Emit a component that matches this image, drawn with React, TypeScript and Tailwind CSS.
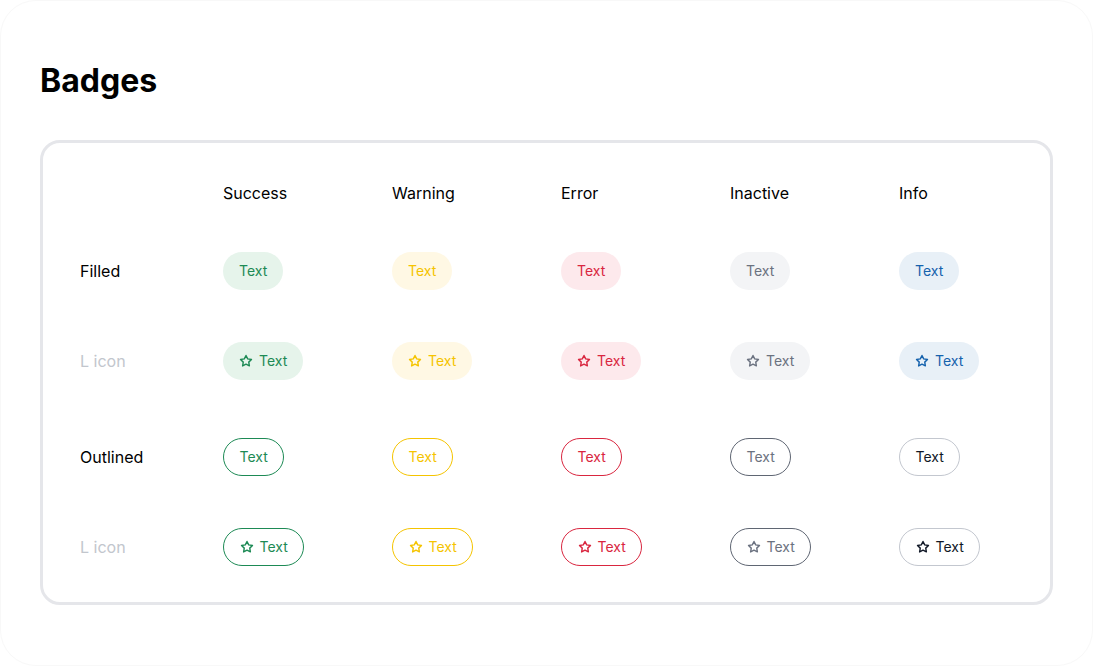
import React from "react";

const Star = ({ className = "" }: { className?: string }) => (
  <svg
    width="14"
    height="14"
    viewBox="0 0 24 24"
    fill="none"
    stroke="currentColor"
    strokeWidth="2.4"
    strokeLinecap="round"
    strokeLinejoin="round"
    className={className}
  >
    <path d="M12 2.5l2.9 5.9 6.5.95-4.7 4.58 1.1 6.47L12 17.35l-5.8 3.05 1.1-6.47-4.7-4.58 6.5-.95L12 2.5z" />
  </svg>
);

type Variant = {
  name: string;
  filled: string;
  outlined: string;
};

const variants: Variant[] = [
  {
    name: "Success",
    filled: "bg-[#e6f4eb] text-[#1d8a55]",
    outlined: "border border-[#1d8a55] text-[#1d8a55]",
  },
  {
    name: "Warning",
    filled: "bg-[#fff8e4] text-[#f5c400]",
    outlined: "border border-[#f5c400] text-[#f5c400]",
  },
  {
    name: "Error",
    filled: "bg-[#fde9ec] text-[#d9263f]",
    outlined: "border border-[#d9263f] text-[#d9263f]",
  },
  {
    name: "Inactive",
    filled: "bg-[#f3f4f6] text-[#6b7280]",
    outlined: "border border-[#5f6673] text-[#6b7280]",
  },
  {
    name: "Info",
    filled: "bg-[#e8f0f7] text-[#1562ad]",
    outlined: "border border-[#c3c7cf] text-[#111827]",
  },
];

const Badge = ({ cls, icon, outlined }: { cls: string; icon?: boolean; outlined?: boolean }) => (
  <span
    className={`inline-flex h-[38px] items-center gap-[6px] rounded-full text-sm leading-5 ${
      outlined ? "px-[15.5px]" : "px-4"
    } ${cls}`}
  >
    {icon && <Star />}
    Text
  </span>
);

const Row = ({
  label,
  muted,
  kind,
  icon,
  className,
}: {
  label: string;
  muted?: boolean;
  kind: "filled" | "outlined";
  icon?: boolean;
  className: string;
}) => (
  <div className={`grid h-[38px] grid-cols-[143px_repeat(5,169px)] items-center ${className}`}>
    <div className={`text-base ${muted ? "text-[#c2c6cd]" : "text-black"}`}>{label}</div>
    {variants.map((v) => (
      <div key={v.name}>
        <Badge
          cls={kind === "filled" ? v.filled : v.outlined}
          icon={icon}
          outlined={kind === "outlined"}
        />
      </div>
    ))}
  </div>
);

export default function App() {
  return (
    <div
      className="h-[666px] w-[1093px] overflow-hidden bg-white"
      style={{ fontFamily: "Inter, 'Noto Sans', sans-serif" }}
    >
      <div className="h-full w-full rounded-[36px] border border-[#f8f8f8] px-[39px] pt-[61px]">
        <h1 className="text-[32px] font-bold leading-[38px] text-black">Badges</h1>
        <div className="mt-[40px] h-[465px] w-[1013px] rounded-[20px] border-[3px] border-[#e5e6ea] pl-[37px] pt-[30px]">
          <div className="grid h-10 grid-cols-[143px_repeat(5,169px)] items-center text-base text-black">
            <div />
            {variants.map((v) => (
              <div key={v.name}>{v.name}</div>
            ))}
          </div>
          <Row label="Filled" kind="filled" className="mt-[39px]" />
          <Row label="L icon" muted kind="filled" icon className="mt-[52px]" />
          <Row label="Outlined" kind="outlined" className="mt-[58px]" />
          <Row label="L icon" muted kind="outlined" icon className="mt-[52px]" />
        </div>
      </div>
    </div>
  );
}
